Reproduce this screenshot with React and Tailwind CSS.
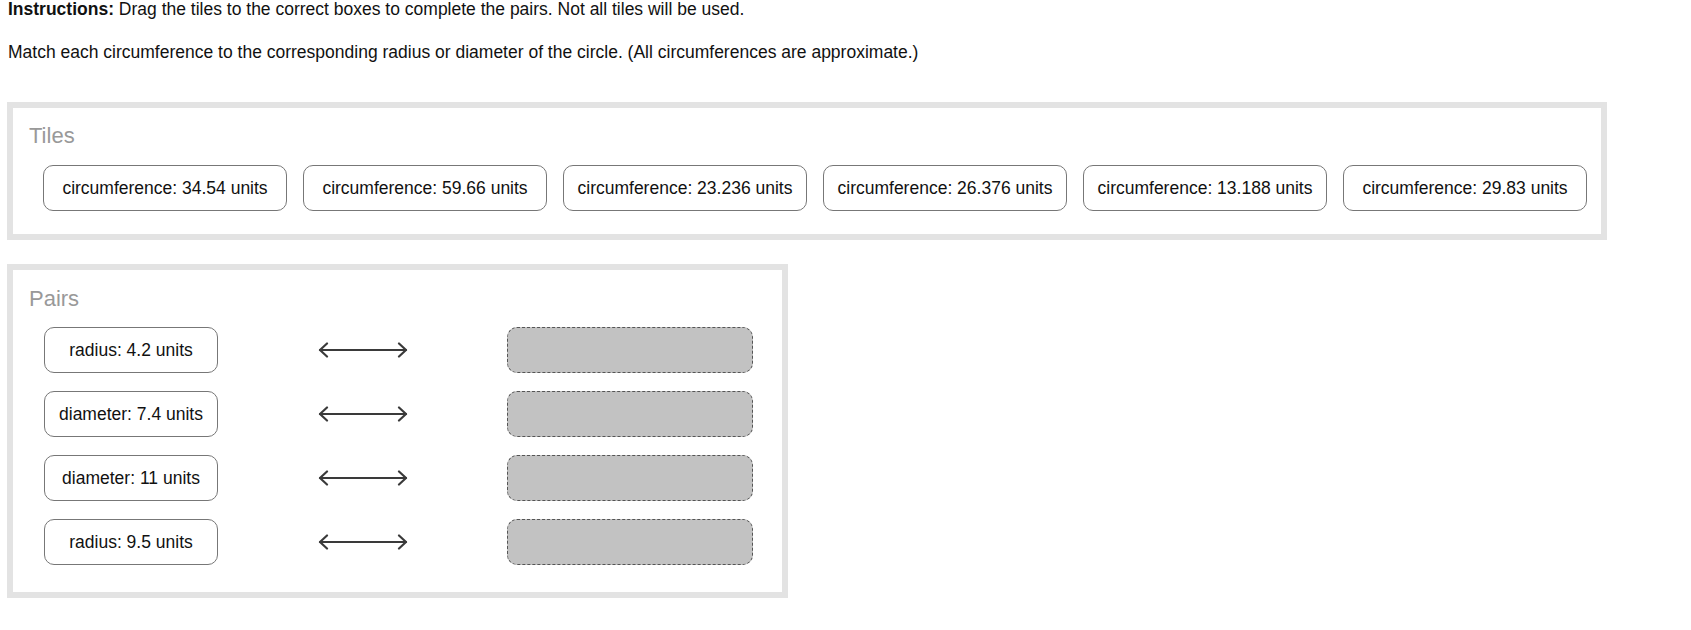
const tiles = [
  'circumference: 34.54 units',
  'circumference: 59.66 units',
  'circumference: 23.236 units',
  'circumference: 26.376 units',
  'circumference: 13.188 units',
  'circumference: 29.83 units',
]

const pairs = ['radius: 4.2 units', 'diameter: 7.4 units', 'diameter: 11 units', 'radius: 9.5 units']

function Arrow() {
  return (
    <svg width="90" height="16" viewBox="0 0 90 16" fill="none" stroke="#3a3a3a" strokeWidth="2.2" strokeLinecap="round" strokeLinejoin="round">
      <path d="M2 8h86" />
      <path d="M9 1.5L2 8l7 6.5" />
      <path d="M81 1.5L88 8l-7 6.5" />
    </svg>
  )
}

export default function App() {
  return (
    <div className="min-h-[630px] w-full bg-white text-[17.5px] text-[#111] font-['Liberation_Sans',Arial,sans-serif]">
      <p className="pl-[8px] leading-[18px]">
        <b>Instructions:</b> Drag the tiles to the correct boxes to complete the pairs. Not all tiles will be used.
      </p>
      <p className="mt-[25px] pl-[8px] leading-[18px]">
        Match each circumference to the corresponding radius or diameter of the circle. (All circumferences are approximate.)
      </p>

      {/* Tiles */}
      <section className="ml-[7px] mt-[41px] w-[1600px] border-[6px] border-[#e3e3e3] bg-white pl-[16px] pt-[15px] pb-[23px]">
        <h2 className="text-[22px] leading-[25px] text-[#999]">Tiles</h2>
        <div className="mt-[17px] ml-[14px] flex gap-[16px]">
          {tiles.map((t) => (
            <div key={t} className="flex h-[46px] w-[244px] items-center justify-center rounded-[10px] border border-[#777] bg-white">
              {t}
            </div>
          ))}
        </div>
      </section>

      {/* Pairs */}
      <section className="ml-[7px] mt-[24px] w-[781px] border-[6px] border-[#e3e3e3] bg-white pl-[16px] pt-[16px] pb-[27px]">
        <h2 className="text-[22px] leading-[25px] text-[#999]">Pairs</h2>
        <div className="mt-[16px] ml-[15px] flex flex-col gap-[18px]">
          {pairs.map((p) => (
            <div key={p} className="flex items-center">
              <div className="flex h-[46px] w-[174px] items-center justify-center rounded-[10px] border border-[#777] bg-white">
                {p}
              </div>
              <div className="ml-[100px]">
                <Arrow />
              </div>
              <div className="ml-[99px] h-[46px] w-[246px] rounded-[10px] border border-dashed border-[#555] bg-[#c2c2c2]" />
            </div>
          ))}
        </div>
      </section>
    </div>
  )
}
